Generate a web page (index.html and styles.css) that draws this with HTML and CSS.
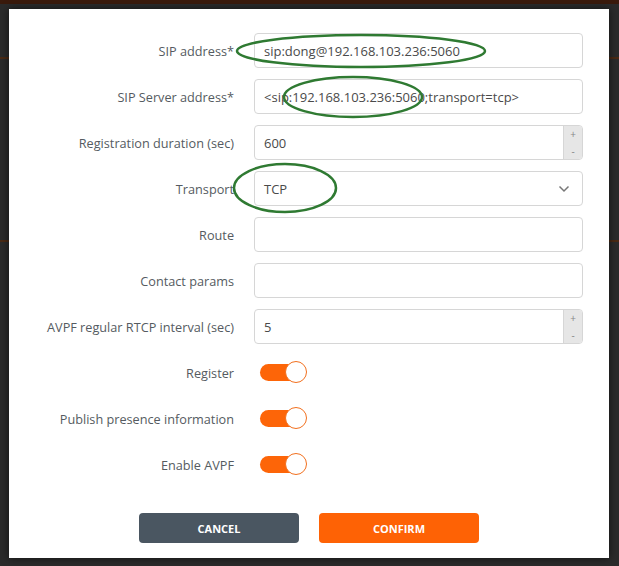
FILE: index.html
```html
<!DOCTYPE html>
<html>
<head>
<meta charset="utf-8">
<link rel="stylesheet" href="styles.css">
</head>
<body>
<div class="topstrip"></div>
<div class="modal">
  <form class="form">
    <label class="lbl">SIP address*</label>
    <div class="field"><div class="input">sip:dong@192.168.103.236:5060</div></div>

    <label class="lbl">SIP Server address*</label>
    <div class="field"><div class="input">&lt;sip:192.168.103.236:5060;transport=tcp&gt;</div></div>

    <label class="lbl">Registration duration (sec)</label>
    <div class="field"><div class="input number"><span class="val">600</span><span class="spin"><span>+</span><span>-</span></span></div></div>

    <label class="lbl">Transport</label>
    <div class="field"><div class="input select"><span class="val">TCP</span>
      <svg class="chev" width="12" height="8" viewBox="0 0 12 8"><path d="M1.5 1.5 L6 6 L10.5 1.5" fill="none" stroke="#777" stroke-width="1.5"/></svg></div></div>

    <label class="lbl">Route</label>
    <div class="field"><div class="input"></div></div>

    <label class="lbl">Contact params</label>
    <div class="field"><div class="input"></div></div>

    <label class="lbl">AVPF regular RTCP interval (sec)</label>
    <div class="field"><div class="input number"><span class="val">5</span><span class="spin"><span>+</span><span>-</span></span></div></div>

    <label class="lbl">Register</label>
    <div class="field"><span class="toggle"><span class="knob"></span></span></div>

    <label class="lbl">Publish presence information</label>
    <div class="field"><span class="toggle"><span class="knob"></span></span></div>

    <label class="lbl">Enable AVPF</label>
    <div class="field"><span class="toggle"><span class="knob"></span></span></div>
  </form>
  <div class="actions">
    <button class="btn cancel" type="button">CANCEL</button>
    <button class="btn confirm" type="button">CONFIRM</button>
  </div>
  <svg class="marks" width="600" height="549" viewBox="0 0 600 549">
    <ellipse cx="352" cy="42" rx="124" ry="16" fill="none" stroke="#2f7a32" stroke-width="2.5"/>
    <ellipse cx="344" cy="88" rx="69" ry="20" fill="none" stroke="#2f7a32" stroke-width="2.5"/>
    <ellipse cx="276" cy="179" rx="51" ry="24" fill="none" stroke="#2f7a32" stroke-width="2.5"/>
  </svg>
</div>
</body>
</html>
```

FILE: styles.css
```css
html, body {
  margin: 0;
  padding: 0;
}
body {
  width: 619px;
  height: 566px;
  overflow: hidden;
  background:
    linear-gradient(to bottom, transparent 57px, #4a2a14 57px, #4a2a14 59px, transparent 59px, transparent 240px, #4a2a14 240px, #4a2a14 242px, transparent 242px),
    #2b2b2b;
  font-family: "Open Sans", "Noto Sans", sans-serif;
  padding: 9px 10px 8px 9px;
  box-sizing: border-box;
  position: relative;
}
.topstrip {
  position: absolute;
  left: 0;
  top: 0;
  width: 619px;
  height: 4px;
  background: #3a1a0c;
}
.modal {
  position: relative;
  width: 600px;
  height: 549px;
  background: #fff;
  box-sizing: border-box;
  padding: 24px 26px 0 0;
  box-shadow: 0 0 8px rgba(0,0,0,0.6);
}
.form {
  display: grid;
  grid-template-columns: 225px 329px;
  column-gap: 20px;
  row-gap: 11px;
  grid-auto-rows: 35px;
  margin: 0;
}
.lbl {
  display: flex;
  align-items: center;
  justify-content: flex-end;
  font-size: 12.7px;
  color: #555b61;
  white-space: nowrap;
}
.field {
  display: flex;
  align-items: center;
}
.input {
  box-sizing: border-box;
  width: 100%;
  height: 35px;
  border: 1px solid #d6d6d6;
  border-radius: 4px;
  padding: 0 0 0 9px;
  display: flex;
  align-items: center;
  font-size: 13px;
  color: #4a4a4a;
  white-space: nowrap;
  overflow: hidden;
}
.input.number {
  padding-right: 0;
}
.val {
  flex: 1;
}
.spin {
  width: 19px;
  height: 100%;
  background: #e6e6e6;
  border-left: 1px solid #d6d6d6;
  display: flex;
  flex-direction: column;
  justify-content: space-between;
  align-items: center;
  font-size: 10px;
  color: #888;
  padding: 2px 0 2px;
  box-sizing: border-box;
  line-height: 12px;
}
.input.select {
  padding-right: 12px;
}
.chev {
  display: block;
}
.toggle {
  position: relative;
  margin-left: 6px;
  width: 40px;
  height: 17px;
  border-radius: 9px;
  background: #fd6508;
}
.knob {
  position: absolute;
  right: -7px;
  top: -3px;
  width: 20px;
  height: 20px;
  border-radius: 50%;
  background: #fff;
  border: 1.5px solid #f2701e;
}
.actions {
  display: flex;
  justify-content: center;
  gap: 20px;
  margin-top: 31px;
  padding-left: 26px;
}
.btn {
  width: 160px;
  height: 30px;
  border: 0;
  border-radius: 4px;
  font-family: "Open Sans", "Noto Sans", sans-serif;
  font-weight: 700;
  font-size: 11px;
  color: #fff;
  padding: 0;
}
.cancel {
  background: #4a5661;
}
.confirm {
  background: #fe6205;
}
.marks {
  position: absolute;
  left: 0;
  top: 0;
  pointer-events: none;
}
```
